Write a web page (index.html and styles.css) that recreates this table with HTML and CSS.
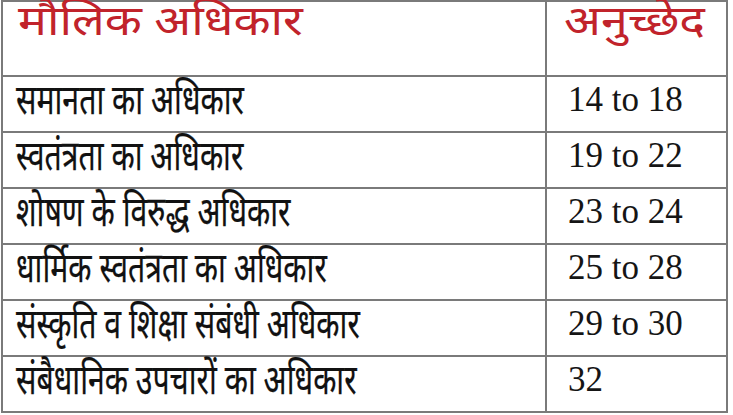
FILE: index.html
```html
<!DOCTYPE html>
<html lang="hi">
<head>
<meta charset="utf-8">
<link rel="stylesheet" href="styles.css">
</head>
<body>
<table class="rights">
  <colgroup><col class="c-name"><col class="c-art"></colgroup>
  <thead>
    <tr class="head">
      <th class="name"><span class="t">मौलिक अधिकार</span></th>
      <th class="art"><span class="t">अनुच्छेद</span></th>
    </tr>
  </thead>
  <tbody>
    <tr><td class="name"><span class="t">समानता का अधिकार</span></td><td class="num">14 to 18</td></tr>
    <tr><td class="name"><span class="t">स्वतंत्रता का अधिकार</span></td><td class="num">19 to 22</td></tr>
    <tr><td class="name"><span class="t">शोषण के विरुद्ध अधिकार</span></td><td class="num">23 to 24</td></tr>
    <tr><td class="name"><span class="t">धार्मिक स्वतंत्रता का अधिकार</span></td><td class="num">25 to 28</td></tr>
    <tr><td class="name"><span class="t">संस्कृति व शिक्षा संबंधी अधिकार</span></td><td class="num">29 to 30</td></tr>
    <tr><td class="name"><span class="t">संबैधानिक उपचारों का अधिकार</span></td><td class="num">32</td></tr>
  </tbody>
</table>
</body>
</html>
```
FILE: styles.css
```css
html, body {
  margin: 0;
  padding: 0;
  background: #ffffff;
}
body {
  padding: 0 0 0 1px;
  font-family: "Noto Sans Devanagari", "Noto Serif Devanagari", "Lohit Devanagari", "Noto Sans", sans-serif;
  color: #111;
}
.rights {
  border-collapse: collapse;
  table-layout: fixed;
  width: 725px;
}
.c-name { width: 544px; }
.c-art { width: 181px; }
.rights th, .rights td {
  border: 2px solid #7a7a7a;
  padding: 0 0 0 13px;
  text-align: left;
  font-weight: normal;
  white-space: nowrap;
}
.t {
  display: inline-block;
  transform-origin: left center;
}
.head th {
  height: 73px;
  vertical-align: top;
  color: #c1232b;
  font-size: 42px;
  line-height: 58px;
}
.head th .t {
  transform: translateY(-6px) scaleX(1.15);
}
.head th.name { padding-left: 15px; }
.head th.art { padding-left: 17px; }
tbody td {
  height: 47px;
  padding-bottom: 8px;
  vertical-align: middle;
  font-size: 42px;
  line-height: 40px;
}
tbody td .t {
  transform: scaleX(0.72);
  -webkit-text-stroke: 0.25px #111;
}
tbody td.num {
  font-family: "Liberation Serif", "Times New Roman", serif;
  font-size: 35px;
  padding-left: 21px;
  height: 45px;
  padding-bottom: 9px;
  color: #151515;
}
```
